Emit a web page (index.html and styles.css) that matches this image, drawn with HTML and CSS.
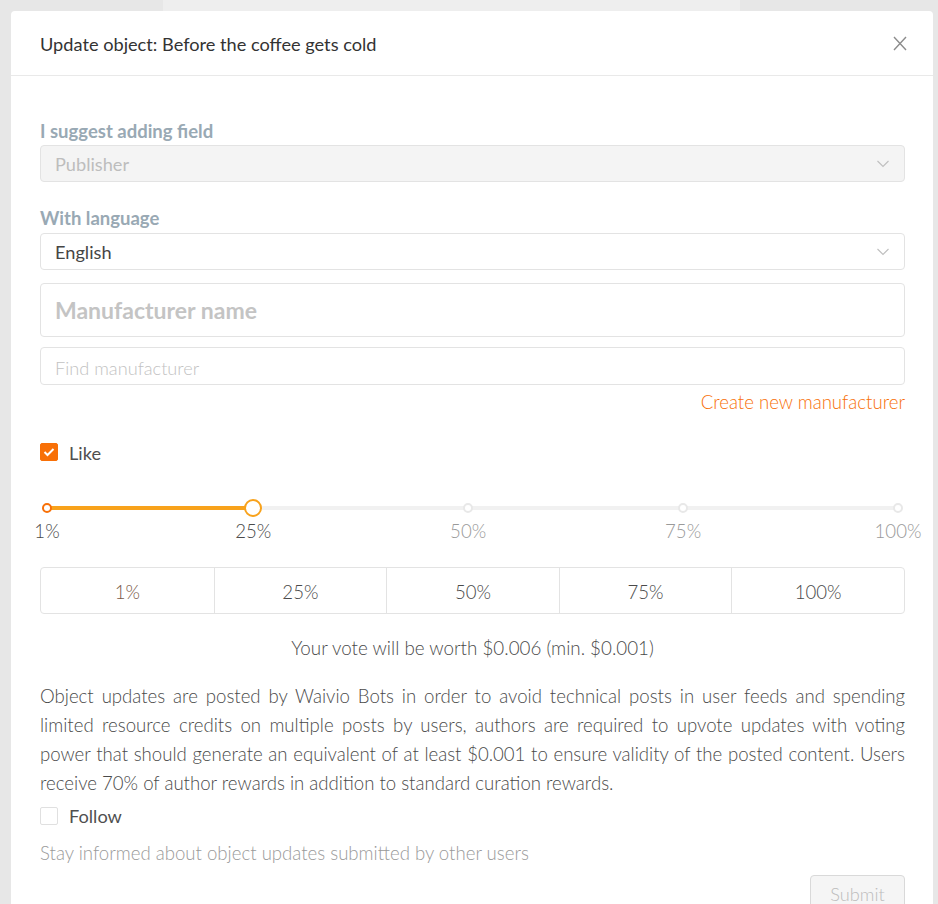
FILE: index.html
```html
<!DOCTYPE html>
<html>
<head>
<meta charset="utf-8">
<link rel="stylesheet" href="styles.css">
</head>
<body>
<div class="backdrop">
  <div class="bg-search"></div>
</div>
<div class="modal">
  <div class="modal-header">
    <div class="modal-title">Update object: Before the coffee gets cold</div>
    <svg class="close" width="14" height="15" viewBox="0 0 14 15"><path d="M1 1 L13 14 M13 1 L1 14" stroke="#8c8c8c" stroke-width="1.4" fill="none"/></svg>
  </div>
  <div class="modal-body">
    <div class="label">I suggest adding field</div>
    <div class="select disabled">
      <span>Publisher</span>
      <svg class="chev" width="12" height="8" viewBox="0 0 12 8"><path d="M0.5 1 L6 6.5 L11.5 1" stroke="#bfbfbf" stroke-width="1.1" fill="none"/></svg>
    </div>
    <div class="label label-2">With language</div>
    <div class="select select-2">
      <span class="val">English</span>
      <svg class="chev" width="12" height="8" viewBox="0 0 12 8"><path d="M0.5 1 L6 6.5 L11.5 1" stroke="#bfbfbf" stroke-width="1.1" fill="none"/></svg>
    </div>
    <div class="input big">Manufacturer name</div>
    <div class="input find">Find manufacturer</div>
    <div class="create-row"><span class="create">Create new manufacturer</span></div>
    <div class="check-row like">
      <span class="box checked"><svg width="12" height="10" viewBox="0 0 12 10"><path d="M1.5 5 L4.5 8 L10.5 2" stroke="#fff" stroke-width="2" fill="none"/></svg></span>
      <span class="check-label">Like</span>
    </div>
    <div class="slider">
      <div class="track">
        <div class="fill" style="width:24.24%"></div>
        <span class="dot active" style="left:0%"></span>
        <span class="dot" style="left:49.49%"></span>
        <span class="dot" style="left:74.75%"></span>
        <span class="dot" style="left:100%"></span>
        <span class="handle" style="left:24.24%"></span>
        <span class="mark dark" style="left:0%">1%</span>
        <span class="mark dark" style="left:24.24%">25%</span>
        <span class="mark" style="left:49.49%">50%</span>
        <span class="mark" style="left:74.75%">75%</span>
        <span class="mark" style="left:100%">100%</span>
      </div>
    </div>
    <div class="btn-group">
      <div class="seg first">1%</div>
      <div class="seg">25%</div>
      <div class="seg">50%</div>
      <div class="seg">75%</div>
      <div class="seg">100%</div>
    </div>
    <div class="worth">Your vote will be worth $0.006 (min. $0.001)</div>
    <p class="info">Object updates are posted by Waivio Bots in order to avoid technical posts in user feeds and spending limited resource credits on multiple posts by users, authors are required to upvote updates with voting power that should generate an equivalent of at least $0.001 to ensure validity of the posted content. Users receive 70% of author rewards in addition to standard curation rewards.</p>
    <div class="check-row follow">
      <span class="box"></span>
      <span class="check-label">Follow</span>
    </div>
    <div class="stay">Stay informed about object updates submitted by other users</div>
    <div class="footer"><button class="submit">Submit</button></div>
  </div>
</div>
</body>
</html>
```
FILE: styles.css
```css
html, body {
  margin: 0;
  padding: 0;
  height: 100%;
  overflow: hidden;
}
body {
  background: #e7e7e7;
  font-family: Lato, "Open Sans", sans-serif;
  color: #4a4a4a;
}
.backdrop {
  position: absolute;
  left: 0; top: 0; right: 0;
  height: 12px;
}
.bg-search {
  position: absolute;
  left: 163px;
  top: 0;
  width: 577px;
  height: 12px;
  background: #eeeeee;
}
.modal {
  position: relative;
  margin: 11px 0 0 11px;
  width: 922px;
  height: 920px;
  background: #fff;
  border-radius: 4px;
}
.modal-header {
  height: 65px;
  border-bottom: 1px solid #e9e9e9;
  display: flex;
  align-items: center;
  justify-content: space-between;
  padding: 0 26px 0 29px;
  box-sizing: border-box;
}
.modal-title {
  font-size: 18.2px;
  color: #333;
  line-height: 22px;
  padding-top: 2px;
}
.close { margin-top: 1px; }
.modal-body {
  padding: 44px 28px 0 29px;
}
.label {
  font-size: 18.5px;
  font-weight: 700;
  color: #99a9b4;
  line-height: 22px;
}
.label-2 { margin-top: 25px; }
.select {
  margin-top: 3px;
  height: 37px;
  box-sizing: border-box;
  border: 1px solid #e3e3e3;
  border-radius: 4px;
  display: flex;
  align-items: center;
  justify-content: space-between;
  padding: 0 15px 0 14px;
  font-size: 18.2px;
}
.select-2 { margin-top: 4px; }
.select.disabled {
  background: #f4f4f4;
  color: #bdbdbd;
}
.select .val { color: #454545; }
.input {
  box-sizing: border-box;
  border: 1px solid #e3e3e3;
  border-radius: 4px;
  padding: 0 14px;
  display: flex;
  align-items: center;
  color: #c2c2c2;
}
.input.big {
  margin-top: 13px;
  height: 54px;
  font-size: 23px;
  font-weight: 700;
  color: #c4c4c4;
}
.input.find {
  margin-top: 10px;
  height: 38px;
  font-size: 18.2px;
  font-weight: 300;
  padding-top: 3px;
}
.create-row {
  margin-top: 6px;
  text-align: right;
  line-height: 22px;
}
.create {
  color: #f87007;
  font-size: 18.6px;
  font-weight: 300;
}
.check-row {
  display: flex;
  align-items: center;
  height: 22px;
}
.check-row.like { margin-top: 27px; }
.check-row.like .check-label { padding-top: 1px; }
.box {
  width: 18px;
  height: 18px;
  box-sizing: border-box;
  border: 1px solid #e0e0e0;
  border-radius: 2px;
  background: #fff;
  display: inline-flex;
  align-items: center;
  justify-content: center;
}
.box.checked {
  background: #f87007;
  border-color: #f87007;
}
.check-label {
  margin-left: 11px;
  font-size: 18.2px;
  color: #4f4f4f;
}
.slider {
  margin-top: 43px;
  padding: 0 7px;
  height: 60px;
}
.track {
  position: relative;
  height: 4px;
  background: #f1f1f1;
  border-radius: 2px;
}
.fill {
  position: absolute;
  left: 0; top: 0;
  height: 4px;
  background: #f8a21b;
  border-radius: 2px;
}
.dot {
  position: absolute;
  top: -3px;
  width: 10px;
  height: 10px;
  box-sizing: border-box;
  margin-left: -5px;
  border: 2px solid #e8e8e8;
  border-radius: 50%;
  background: #fff;
}
.dot.active { border-color: #f87007; }
.handle {
  position: absolute;
  top: -7px;
  width: 18px;
  height: 18px;
  margin-left: -9px;
  box-sizing: border-box;
  border: 2px solid #f8a21b;
  border-radius: 50%;
  background: #fff;
}
.mark {
  position: absolute;
  top: 14px;
  transform: translateX(-50%);
  font-size: 18.6px;
  line-height: 22px;
  font-weight: 300;
  color: #9a9a9a;
  white-space: nowrap;
}
.mark.dark { color: #4a4a4a; }
.btn-group {
  margin-top: 1px;
  display: grid;
  grid-template-columns: repeat(5, 1fr);
  height: 47px;
  border: 1px solid #e3e3e3;
  border-radius: 4px;
  box-sizing: border-box;
}
.seg {
  display: flex;
  align-items: center;
  justify-content: center;
  font-size: 18.6px;
  font-weight: 300;
  color: #4a4a4a;
  border-left: 1px solid #e3e3e3;
  padding-top: 2px;
}
.seg.first { border-left: none; color: #7a5a48; }
.worth {
  margin-top: 23px;
  text-align: center;
  font-size: 18.8px;
  font-weight: 300;
  line-height: 22px;
  color: #4a4a4a;
}
.info {
  margin: 23px 0 0;
  text-align: justify;
  font-size: 18.6px;
  font-weight: 300;
  line-height: 29px;
  color: #4a4a4a;
}
.check-row.follow { margin-top: 7px; }
.stay {
  margin-top: 15px;
  font-size: 18.6px;
  font-weight: 300;
  line-height: 22px;
  color: #9a9a9a;
}
.footer {
  margin-top: 11px;
  display: flex;
  justify-content: flex-end;
}
.submit {
  font-family: Lato, sans-serif;
  font-size: 18.2px;
  font-weight: 300;
  width: 95px;
  height: 36px;
  background: #f5f5f5;
  color: #bcbcbc;
  border: 1px solid #d9d9d9;
  border-radius: 4px;
  padding-top: 2px;
}
```
